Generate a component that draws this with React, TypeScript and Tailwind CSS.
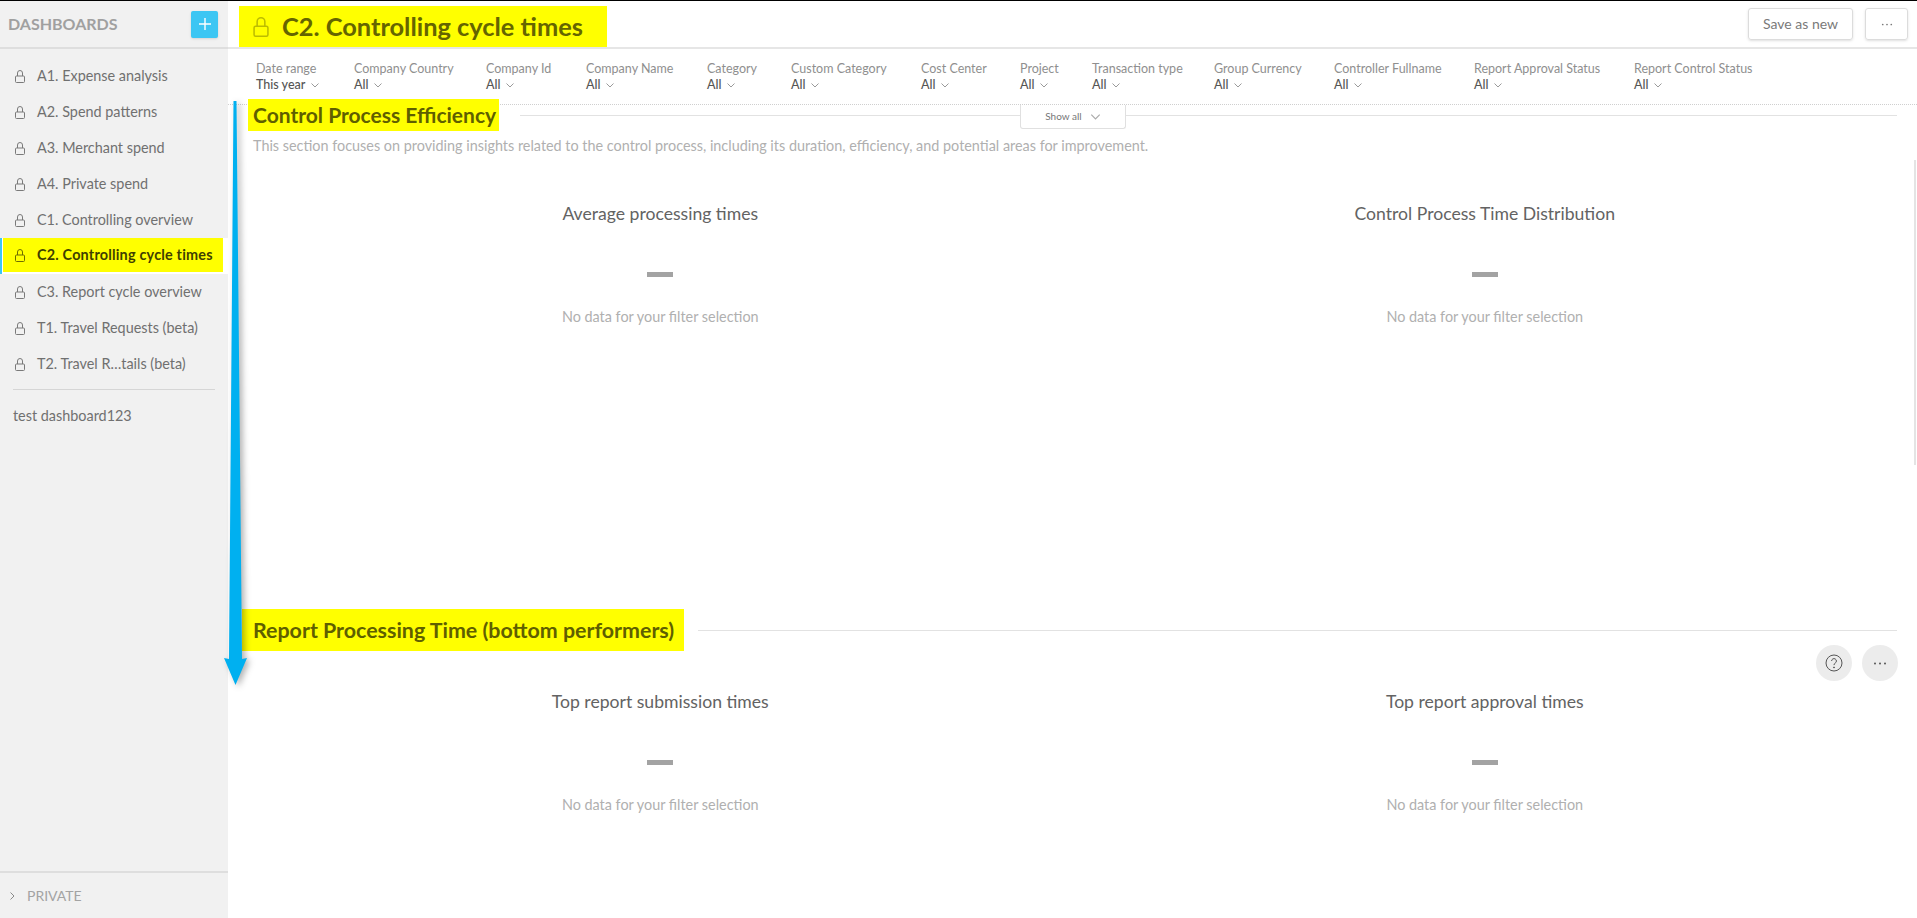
import { type ReactNode } from "react"

const dashboards = [
  "A1. Expense analysis",
  "A2. Spend patterns",
  "A3. Merchant spend",
  "A4. Private spend",
  "C1. Controlling overview",
  "C2. Controlling cycle times",
  "C3. Report cycle overview",
  "T1. Travel Requests (beta)",
  "T2. Travel R…tails (beta)",
]

const filters = [
  { label: "Date range", value: "This year", width: "w-[98px]" },
  { label: "Company Country", value: "All", width: "w-[132px]" },
  { label: "Company Id", value: "All", width: "w-[100px]" },
  { label: "Company Name", value: "All", width: "w-[121px]" },
  { label: "Category", value: "All", width: "w-[84px]" },
  { label: "Custom Category", value: "All", width: "w-[130px]" },
  { label: "Cost Center", value: "All", width: "w-[99px]" },
  { label: "Project", value: "All", width: "w-[72px]" },
  { label: "Transaction type", value: "All", width: "w-[122px]" },
  { label: "Group Currency", value: "All", width: "w-[120px]" },
  { label: "Controller Fullname", value: "All", width: "w-[140px]" },
  { label: "Report Approval Status", value: "All", width: "w-[160px]" },
  { label: "Report Control Status", value: "All", width: "w-[140px]" },
]

function Lock({ className }: { className: string }) {
  return (
    <svg viewBox="0 0 10 13" fill="none" stroke="currentColor" strokeWidth="1" className={className}>
      <path d="M2.5 6V3a2.5 2.5 0 0 1 5 0v3" />
      <rect x="0.5" y="6" width="9" height="6.5" rx="1" />
    </svg>
  )
}

function Chevron({ className }: { className: string }) {
  return (
    <svg viewBox="0 0 8 5" fill="none" stroke="currentColor" strokeWidth="1" className={className}>
      <path d="M0.5 0.5 4 4l3.5-3.5" />
    </svg>
  )
}

function Dots({ className }: { className: string }) {
  return (
    <svg viewBox="0 0 14 3" fill="currentColor" className={className}>
      <circle cx="2" cy="1.5" r="1" />
      <circle cx="7" cy="1.5" r="1" />
      <circle cx="12" cy="1.5" r="1" />
    </svg>
  )
}

function Widget({ title }: { title: string }) {
  return (
    <div className="flex flex-col items-center">
      <p className="text-[17.6px] leading-6 text-[#636363]">{title}</p>
      <div className="mt-[46px] h-[5px] w-[26px] bg-[#a3a3a3]" />
      <p className="mt-[30px] text-[14.4px] leading-5 text-[#b0b0b0]">No data for your filter selection</p>
    </div>
  )
}

function Highlight({ children, className }: { children: ReactNode; className: string }) {
  return <div className={`flex items-center bg-[#ffff00] ${className}`}>{children}</div>
}

export default function App() {
  return (
    <div className="relative flex h-[918px] w-[1917px] overflow-hidden border-t border-black bg-white font-['Lato',sans-serif]">
      {/* Sidebar */}
      <aside className="flex w-[228px] shrink-0 flex-col bg-[#f1f1f1]">
        <div className="flex h-[48px] shrink-0 items-center justify-between border-b-2 border-[#dedede] pl-2 pr-[10px]">
          <span className="text-base font-bold text-[#a0a0a0]">DASHBOARDS</span>
          <button className="flex h-[27px] w-[27px] items-center justify-center rounded-[2px] bg-[#3cc6f3] shadow-sm">
            <svg viewBox="0 0 12 12" stroke="white" strokeWidth="1.4" className="h-3 w-3">
              <path d="M6 0v12M0 6h12" />
            </svg>
          </button>
        </div>
        <nav className="flex-1 pt-[9px]">
          {dashboards.map((name) =>
            name.startsWith("C2") ? (
              <div key={name} className="flex h-9 border-l-2 border-[#3cc6f3] bg-white pb-[2px] pl-px pr-[5px]">
                <div className="flex flex-1 items-center bg-[#ffff00] pl-3">
                  <Lock className="h-[13px] w-[10px] text-[#6e6e00]" />
                  <span className="ml-3 text-[14.4px] font-bold tracking-[0.2px] whitespace-nowrap text-[#3f3f00]">{name}</span>
                </div>
              </div>
            ) : (
              <div key={name} className="flex h-9 items-center pl-[15px]">
                <Lock className="h-[13px] w-[10px] text-[#7a7a7a]" />
                <span className="ml-3 text-[14.4px] text-[#707070]">{name}</span>
              </div>
            ),
          )}
          <div className="mx-[13px] mt-[7px] border-t border-[#d6d6d6]" />
          <p className="mt-4 pl-[13px] text-[14.4px] leading-5 text-[#707070]">test dashboard123</p>
        </nav>
        <div className="flex h-[47px] shrink-0 items-center border-t-2 border-[#dedede] pl-[10px]">
          <svg viewBox="0 0 5 8" fill="none" stroke="#8a8a8a" className="h-2 w-[5px]">
            <path d="M0.5 0.5 4 4 0.5 7.5" />
          </svg>
          <span className="ml-3 text-sm text-[#a3a3a3]">PRIVATE</span>
        </div>
      </aside>

      {/* Main */}
      <main className="relative flex min-w-0 flex-1 flex-col">
        <header className="flex h-[48px] shrink-0 items-center justify-between border-b-2 border-[#e6e6e6] pr-[9px]">
          <Highlight className="ml-[11px] mt-[5px] h-[41px] w-[368px] self-start pl-[14px]">
            <Lock className="h-[20px] w-[16px] text-[#bcbc00]" />
            <h1 className="ml-[13px] text-[25.4px] font-bold whitespace-nowrap text-[#656500]">C2. Controlling cycle times</h1>
          </Highlight>
          <div className="flex gap-3">
            <button className="h-8 w-[105px] rounded-[3px] border border-[#dcdcdc] text-sm text-[#7a7a7a] shadow-sm">Save as new</button>
            <button className="flex h-8 w-[43px] items-center justify-center rounded-[3px] border border-[#dcdcdc] text-[#7a7a7a] shadow-sm">
              <Dots className="h-[3px] w-3" />
            </button>
          </div>
        </header>

        <div className="flex h-[56px] shrink-0 items-start border-b border-dotted border-[#cfcfcf] pl-7 pt-3">
          {filters.map((f) => (
            <div key={f.label} className={f.width}>
              <p className="text-[12.5px] leading-4 whitespace-nowrap text-[#8f8f8f]">{f.label}</p>
              <p className="flex items-center text-[12.5px] leading-4 font-medium text-[#555]">
                {f.value}
                <Chevron className="ml-[6px] h-[5px] w-2 text-[#9a9a9a]" />
              </p>
            </div>
          ))}
        </div>

        {/* Show all tab, hangs over the section rule */}
        <button className="absolute left-[792px] top-[104px] z-10 flex h-6 w-[106px] items-center justify-center gap-2 rounded-b-[3px] border border-t-0 border-[#e0e0e0] bg-white text-[10px] text-[#777]">
          Show all
          <Chevron className="h-[6px] w-[11px] text-[#aaa]" />
        </button>

        <section className="relative -mt-[6px] pl-5 pr-5">
          <div className="flex items-center">
            <Highlight className="h-8 w-[251px] pl-[5px]">
              <h2 className="text-[21px] font-bold whitespace-nowrap text-[#5f5f00]">Control Process Efficiency</h2>
            </Highlight>
            <div className="ml-[21px] flex-1 border-t border-[#e2e2e2]" />
          </div>
          <p className="mt-[5px] pl-[5px] text-[14.4px] leading-5 text-[#b0b0b0]">
            This section focuses on providing insights related to the control process, including its duration, efficiency, and potential areas for improvement.
          </p>
          <div className="mt-[46px] grid h-[407px] grid-cols-2">
            <Widget title="Average processing times" />
            <Widget title="Control Process Time Distribution" />
          </div>
        </section>

        <section className="relative pl-[14px] pr-5">
          <div className="flex items-center">
            <Highlight className="h-[42px] w-[442px] pl-[11px]">
              <h2 className="text-[21.4px] font-bold whitespace-nowrap text-[#5f5f00]">Report Processing Time (bottom performers)</h2>
            </Highlight>
            <div className="ml-[14px] flex-1 border-t border-[#e2e2e2]" />
          </div>
          <div className="mt-[39px] ml-[6px] grid grid-cols-2">
            <Widget title="Top report submission times" />
            <Widget title="Top report approval times" />
          </div>
          <div className="absolute right-[19px] top-[36px] flex gap-[10px]">
            <div className="flex h-9 w-9 items-center justify-center rounded-full bg-[#ececec] text-[#555]">
              <svg viewBox="0 0 18 18" fill="none" stroke="currentColor" className="h-[18px] w-[18px]">
                <circle cx="9" cy="9" r="8" />
                <path d="M6.6 7a2.4 2.4 0 1 1 3.6 2.1c-.8.5-1.2 1-1.2 2" />
                <circle cx="9" cy="13.4" r="0.5" fill="currentColor" />
              </svg>
            </div>
            <div className="flex h-9 w-9 items-center justify-center rounded-full bg-[#ececec] text-[#555]">
              <Dots className="h-[3px] w-[14px]" />
            </div>
          </div>
        </section>

        {/* Scrollbar thumb */}
        <div className="absolute right-[1px] top-[159px] h-[305px] w-[2px] bg-[#e4e4e4]" />
      </main>

      {/* Annotation arrow drawn over the page */}
      <svg viewBox="0 0 30 590" className="pointer-events-none absolute left-[222px] top-[99px] z-20 h-[590px] w-[30px] drop-shadow-[3px_2px_3px_rgba(0,0,0,0.3)]">
        <path d="M11.5 1h3l5.5 558 5-1-11.5 27L2 558l5 1z" fill="#00b0f0" />
      </svg>
    </div>
  )
}
